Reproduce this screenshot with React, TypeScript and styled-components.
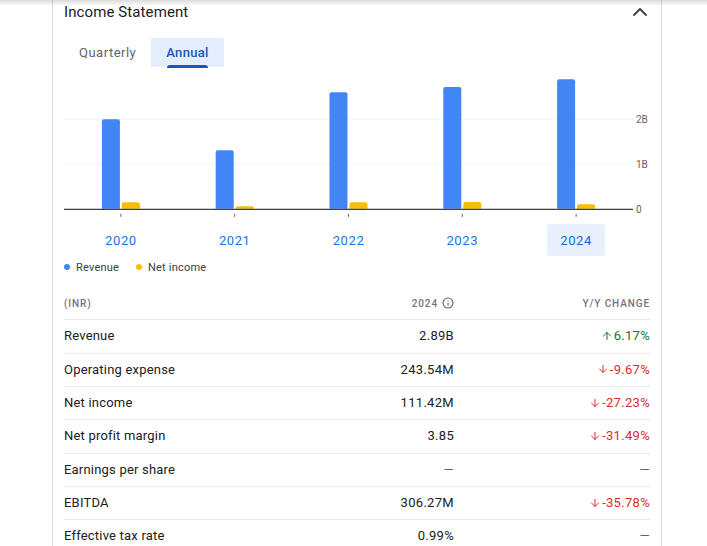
import styled, { createGlobalStyle } from "styled-components"
import { ChevronUp, Info, ArrowUp, ArrowDown } from "lucide-react"

const GlobalStyle = createGlobalStyle`
  html, body {
    margin: 0;
    padding: 0;
    background: #fff;
    overflow: hidden;
    font-family: Roboto, "Liberation Sans", Arial, sans-serif;
    color: #202124;
  }
`

const TopShade = styled.div`
  position: fixed;
  top: 0;
  left: 0;
  right: 0;
  height: 6px;
  background: linear-gradient(rgba(0, 0, 0, 0.14), rgba(0, 0, 0, 0));
  pointer-events: none;
`

const Card = styled.section`
  box-sizing: border-box;
  width: 610px;
  min-height: 546px;
  margin-left: 52px;
  padding: 0 11px;
  border-left: 1px solid #dadce0;
  border-right: 1px solid #dadce0;
`

const Header = styled.div`
  display: flex;
  justify-content: space-between;
  align-items: center;
  height: 24px;
`

const Title = styled.h2`
  margin: 0;
  font-size: 15px;
  font-weight: 400;
  color: #202124;
  letter-spacing: 0.1px;
`

const Collapse = styled.span`
  display: flex;
  margin-right: -2px;
  color: #3c4043;
`

const Tabs = styled.div`
  display: flex;
  margin-top: 14px;
  height: 29px;
`

const Tab = styled.div<{ $active?: boolean }>`
  display: flex;
  align-items: center;
  padding: ${p => (p.$active ? "0 15px 0 15px" : "0 15px")};
  font-size: 13px;
  font-weight: ${p => (p.$active ? 500 : 400)};
  letter-spacing: ${p => (p.$active ? "0.3px" : "0.5px")};
  color: ${p => (p.$active ? "#1a56b8" : "#5f6368")};
  background: ${p => (p.$active ? "#e3edfc" : "transparent")};
  border-radius: 2px 2px 0 0;
`

const TabLabel = styled.span<{ $active?: boolean }>`
  position: relative;
  &::after {
    content: "";
    display: ${p => (p.$active ? "block" : "none")};
    position: absolute;
    left: 1px;
    right: 1px;
    bottom: -8px;
    height: 3px;
    border-radius: 3px 3px 0 0;
    background: #1a56b8;
  }
`

const ChartSvg = styled.svg`
  display: block;
  margin-top: 3px;
`

const YearRow = styled.div`
  display: flex;
  width: 569px;
  margin-top: 4px;
`

const YearCell = styled.div`
  flex: 1;
  display: flex;
  justify-content: center;
`

const YearButton = styled.div<{ $active?: boolean }>`
  width: 58px;
  height: 32px;
  display: flex;
  align-items: center;
  justify-content: center;
  border-radius: 4px;
  font-size: 13px;
  font-weight: 400;
  letter-spacing: 0.6px;
  color: ${p => (p.$active ? "#1967d2" : "#1a73e8")};
  background: ${p => (p.$active ? "#e8f0fe" : "transparent")};
`

const Legend = styled.div`
  display: flex;
  align-items: center;
  gap: 17px;
  margin-top: 5px;
  height: 12px;
`

const LegendItem = styled.div`
  display: flex;
  align-items: center;
  gap: 6px;
  font-size: 11px;
  font-weight: 400;
  letter-spacing: 0.2px;
  color: #3c4043;
`

const Dot = styled.span<{ $color: string }>`
  width: 6px;
  height: 6px;
  border-radius: 50%;
  background: ${p => p.$color};
`

const Table = styled.div`
  margin-top: 14px;
`

const HeadRow = styled.div`
  display: grid;
  grid-template-columns: 1fr 130px 196px;
  align-items: center;
  height: 32.3px;
  font-size: 10px;
  font-weight: 500;
  letter-spacing: 0.9px;
  color: #70757a;
`

const Row = styled.div`
  box-sizing: border-box;
  display: grid;
  grid-template-columns: 1fr 130px 196px;
  align-items: center;
  height: 33.33px;
  padding-bottom: 1px;
  border-top: 1px solid #e8eaed;
  font-size: 13px;
  font-weight: 400;
  color: #202124;
  letter-spacing: 0.2px;
`

const Right = styled.div`
  display: flex;
  justify-content: flex-end;
  align-items: center;
  gap: 4px;
`

const Value = styled(Right)`
  letter-spacing: 0.3px;
`

const Change = styled(Right)<{ $dir: "up" | "down" | "none" }>`
  gap: 1px;
  letter-spacing: 0.3px;
  color: ${p => (p.$dir === "up" ? "#137333" : p.$dir === "down" ? "#d93025" : "#5f6368")};
`

const Dash = styled.span`
  color: #5f6368;
`

const years = [
  { year: "2020", revenue: 2.0, net: 0.155 },
  { year: "2021", revenue: 1.31, net: 0.07 },
  { year: "2022", revenue: 2.6, net: 0.155 },
  { year: "2023", revenue: 2.72, net: 0.16 },
  { year: "2024", revenue: 2.89, net: 0.111 },
]

const rows: { label: string; value: string; change: string; dir: "up" | "down" | "none" }[] = [
  { label: "Revenue", value: "2.89B", change: "6.17%", dir: "up" },
  { label: "Operating expense", value: "243.54M", change: "-9.67%", dir: "down" },
  { label: "Net income", value: "111.42M", change: "-27.23%", dir: "down" },
  { label: "Net profit margin", value: "3.85", change: "-31.49%", dir: "down" },
  { label: "Earnings per share", value: "—", change: "—", dir: "none" },
  { label: "EBITDA", value: "306.27M", change: "-35.78%", dir: "down" },
  { label: "Effective tax rate", value: "0.99%", change: "—", dir: "none" },
]

const BASE = 139.3
const PER_B = 45
const BAND = 569 / 5

const Chart = () => (
  <ChartSvg width={588} height={150} viewBox="0 0 588 150">
    <line x1={0} x2={569} y1={BASE - 2 * PER_B} y2={BASE - 2 * PER_B} stroke="#f1f3f4" strokeWidth={1} />
    <line x1={0} x2={569} y1={BASE - PER_B} y2={BASE - PER_B} stroke="#f1f3f4" strokeWidth={1} />
    {years.map((y, i) => {
      const c = BAND * i + BAND / 2
      const rh = y.revenue * PER_B
      const nh = y.net * PER_B
      return (
        <g key={y.year}>
          <rect x={c - 19} y={BASE - rh} width={18} height={rh + 2} rx={2} fill="#4285f4" />
          <rect x={c + 1} y={BASE - nh} width={18} height={nh + 2} rx={2} fill="#fbbc04" />
        </g>
      )
    })}
    <rect x={0} y={BASE - 0.5} width={569} height={40} fill="#fff" />
    <line x1={0} x2={569} y1={BASE} y2={BASE} stroke="#3c4043" strokeWidth={1.2} />
    {years.map((y, i) => (
      <rect key={y.year} x={BAND * i + BAND / 2 - 0.5} y={BASE + 4.5} width={1} height={3} fill="#5f6368" />
    ))}
    <g fontFamily="Roboto, sans-serif" fontSize={10} fill="#5f6368">
      <text x={572} y={BASE - 2 * PER_B + 3.5}>2B</text>
      <text x={572} y={BASE - PER_B + 3.5}>1B</text>
      <text x={572} y={BASE + 3.5}>0</text>
    </g>
  </ChartSvg>
)

export default function App() {
  return (
    <>
      <GlobalStyle />
      <Card>
        <Header>
          <Title>Income Statement</Title>
          <Collapse>
            <ChevronUp size={24} strokeWidth={1.8} />
          </Collapse>
        </Header>
        <Tabs>
          <Tab>Quarterly</Tab>
          <Tab $active>
            <TabLabel $active>Annual</TabLabel>
          </Tab>
        </Tabs>
        <Chart />
        <YearRow>
          {years.map((y, i) => (
            <YearCell key={y.year}>
              <YearButton $active={i === years.length - 1}>{y.year}</YearButton>
            </YearCell>
          ))}
        </YearRow>
        <Legend>
          <LegendItem>
            <Dot $color="#4285f4" />
            Revenue
          </LegendItem>
          <LegendItem>
            <Dot $color="#fbbc04" />
            Net income
          </LegendItem>
        </Legend>
        <Table>
          <HeadRow>
            <div>(INR)</div>
            <Right>
              2024 <Info size={12} strokeWidth={2.2} color="#5f6368" />
            </Right>
            <Right>Y/Y CHANGE</Right>
          </HeadRow>
          {rows.map(r => (
            <Row key={r.label}>
              <div>{r.label}</div>
              <Value>{r.value === "—" ? <Dash>—</Dash> : r.value}</Value>
              <Change $dir={r.dir}>
                {r.dir === "up" && <ArrowUp size={12} strokeWidth={2} />}
                {r.dir === "down" && <ArrowDown size={12} strokeWidth={2} />}
                {r.dir === "none" ? <Dash>—</Dash> : r.change}
              </Change>
            </Row>
          ))}
        </Table>
      </Card>
      <TopShade />
    </>
  )
}
